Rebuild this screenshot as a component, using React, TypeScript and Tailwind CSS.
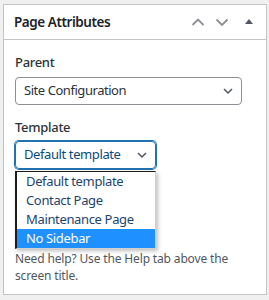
import React from "react";

const options = ["Default template", "Contact Page", "Maintenance Page", "No Sidebar"];

const Chevron = ({ up = false }: { up?: boolean }) => (
  <svg width="14" height="14" viewBox="0 0 14 14" className="text-[#8c8f94]">
    <path
      d={up ? "M1.5 10 L7 4.5 L12.5 10" : "M1.5 4.5 L7 10 L12.5 4.5"}
      fill="none"
      stroke="currentColor"
      strokeWidth="1.8"
    />
  </svg>
);

const SelectArrow = () => (
  <svg width="10" height="10" viewBox="0 0 10 10" className="text-[#50575e]">
    <path d="M1 3 L5 7 L9 3" fill="none" stroke="currentColor" strokeWidth="1.5" />
  </svg>
);

export default function App() {
  return (
    <div
      className="w-[269px] h-[300px] bg-[#f0f0f1] pt-[4px] pl-[3px]"
      style={{ fontFamily: '"Noto Sans", "Open Sans", sans-serif' }}
    >
      <div className="w-[264px] h-[291px] border border-[#c3c4c7] bg-white">
        {/* header */}
        <div className="h-[35px] border-b border-[#c3c4c7] flex items-center pl-[10px] pr-[10px]">
          <h2 className="text-[13.5px] font-semibold tracking-[-0.45px] text-[#1d2327] flex-1">
            Page Attributes
          </h2>
          <div className="flex items-center gap-[10px] mr-[16px]">
            <Chevron up />
            <Chevron />
          </div>
          <svg width="8" height="6" viewBox="0 0 8 6" className="text-[#50575e] mr-[3px] mb-[2px]">
            <path d="M0 6 L4 1 L8 6 Z" fill="currentColor" />
          </svg>
        </div>

        {/* body */}
        <div className="pl-[11px] pt-[13px]">
          <p className="text-[13px] leading-[18px] font-medium tracking-[-0.3px] text-[#2c3338]">Parent</p>
          <div className="mt-[6px] w-[227px] h-[28px] border border-[#8c8f94] rounded-[4px] flex items-center justify-between pl-[8px] pr-[8px] text-[13px] tracking-[-0.45px] text-[#2c3338]">
            <span>Site Configuration</span>
            <SelectArrow />
          </div>

          <p className="mt-[13px] text-[13px] leading-[18px] font-medium tracking-[-0.3px] text-[#2c3338]">Template</p>
          <div className="relative mt-[5px]">
            <div className="w-[141px] h-[28px] border border-[#2271b1] rounded-[4px] shadow-[0_0_0_1px_#2271b1] flex items-center justify-between pl-[8px] pr-[8px] text-[13px] tracking-[-0.4px] text-[#0a4b78]">
              <span>Default template</span>
              <SelectArrow />
            </div>
            <div className="absolute left-0 top-[30px] w-[141px] bg-white border-t border-l-2 border-[#1d1d1d] border-r border-r-[#d0d0d0] border-b border-b-[#d0d0d0] shadow-[2px_2px_4px_rgba(0,0,0,0.25)]">
              {options.map((o, i) => (
                <div
                  key={o}
                  className={`h-[19px] leading-[19px] pl-[9px] text-[13px] tracking-[-0.35px] ${
                    i === 3 ? "bg-[#1e90ff] text-white" : "text-[#1e4470]"
                  }`}
                >
                  {o}
                </div>
              ))}
            </div>
          </div>

          <p className="mt-[81px] text-[12px] leading-[17px] tracking-[-0.15px] text-[#50575e] pr-[20px]">
            Need help? Use the Help tab above the screen title.
          </p>
        </div>
      </div>
    </div>
  );
}
